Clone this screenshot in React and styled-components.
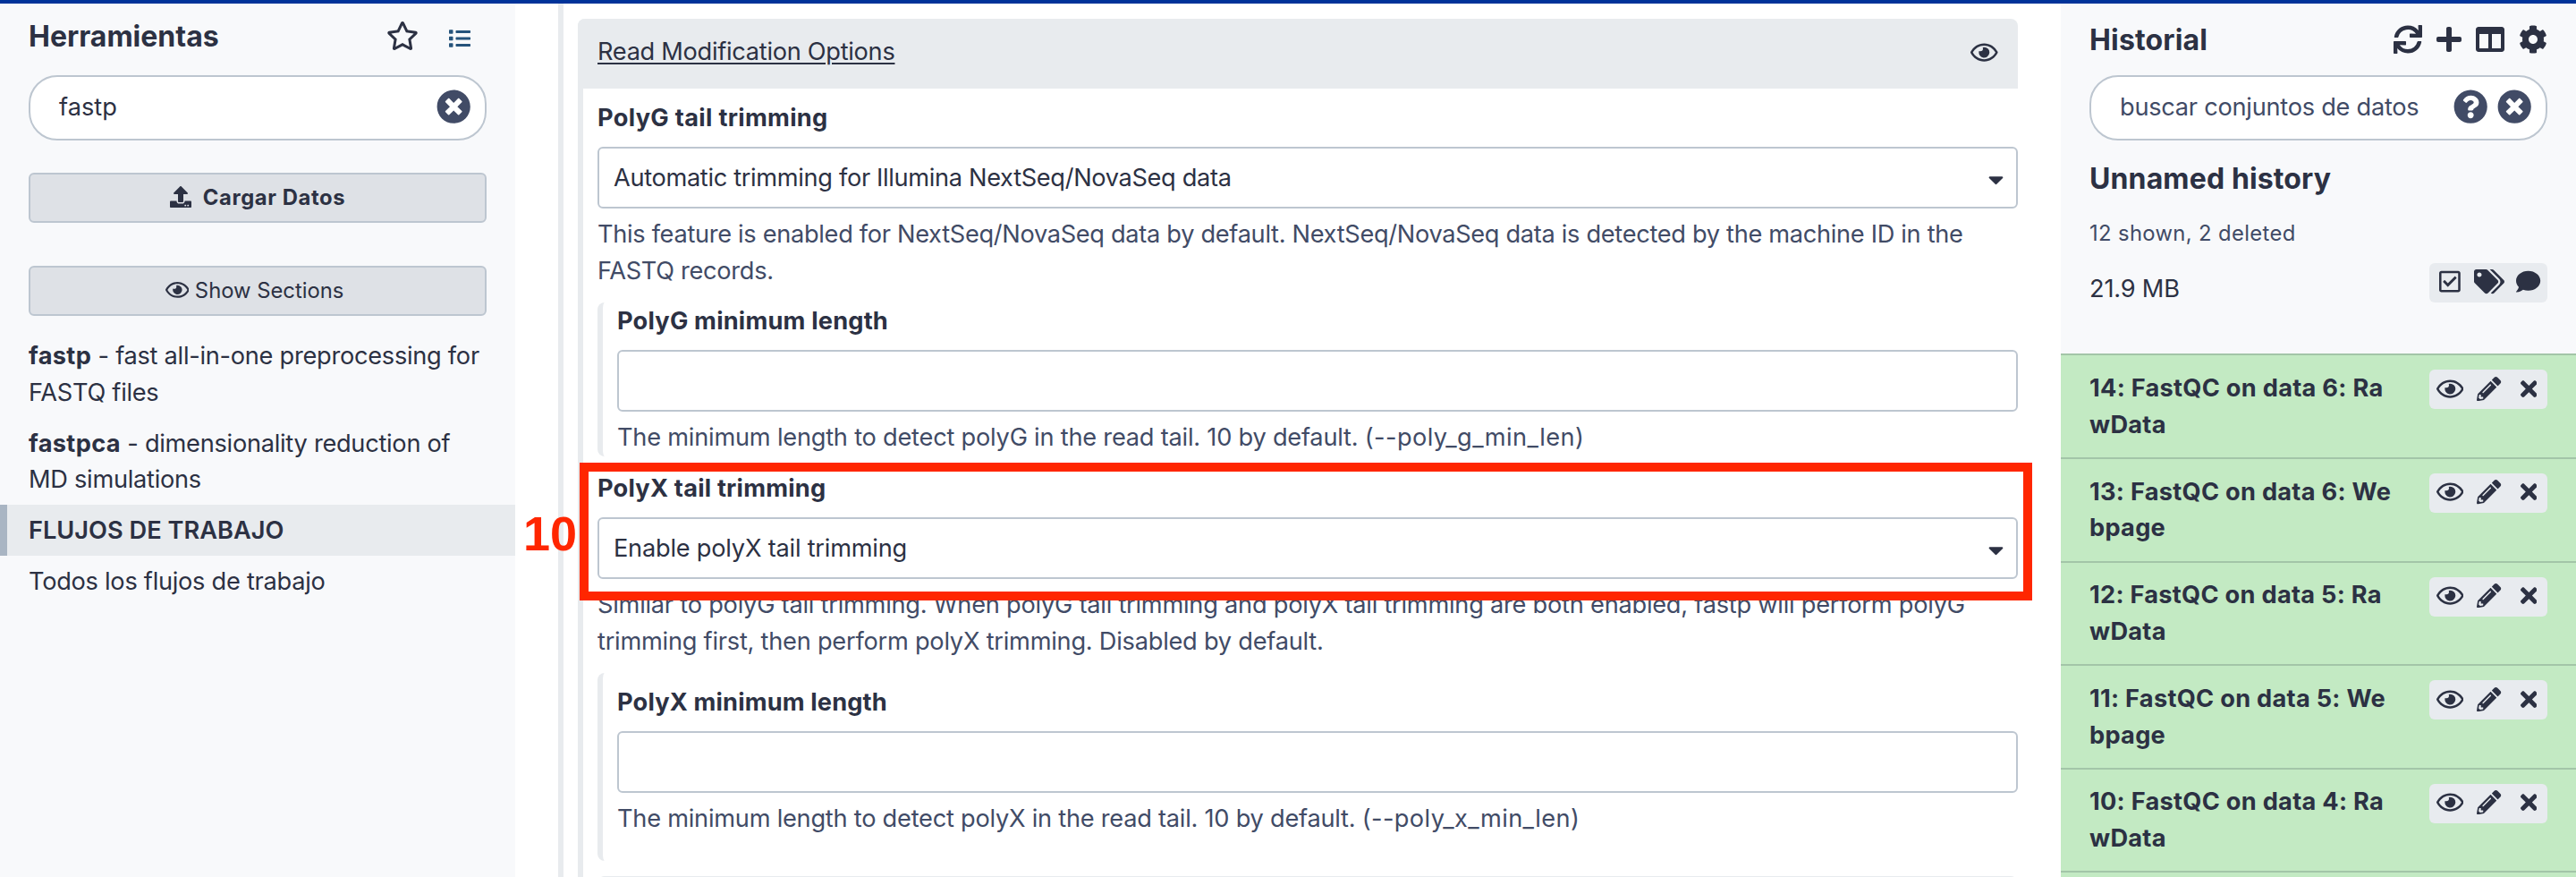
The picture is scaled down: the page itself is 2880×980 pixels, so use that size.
import React from "react";
import styled, { createGlobalStyle, css } from "styled-components";
import {
  FaCog, FaColumns, FaComment, FaList, FaPencilAlt, FaPlus, FaQuestionCircle,
  FaRegCheckSquare, FaRegEye, FaRegStar, FaSync, FaTags, FaTimes, FaTimesCircle, FaUpload, FaCaretDown,
} from "react-icons/fa";

const c = {
  text: "#2c3143",
  muted: "#414b66",
  border: "#bdc6d0",
  panel: "#f8f9fb",
  soft: "#e8ebee",
  button: "#dee1e6",
  mast: "#003399",
  ok: "#c3eac3",
  okLine: "#a3c5a8",
  mark: "#ff2600",
};

const GlobalStyle = createGlobalStyle`
  * { box-sizing: border-box; }
  body { margin: 0; background: #fff; }
`;

const tracked = css`
  letter-spacing: ${(p) => p.$track || 0}px;
`;

const Page = styled.div`
  position: relative;
  width: 2880px;
  height: 980px;
  overflow: hidden;
  border-top: 4px solid ${c.mast};
  display: grid;
  grid-template-columns: 576px 1fr 576px;
  font: 400 27.2px/40.8px Inter, "Liberation Sans", sans-serif;
  color: ${c.text};
`;

const SidePanel = styled.aside`
  background: ${c.panel};
  height: 976px;
  overflow: hidden;
`;

const PanelHeader = styled.header`
  display: flex;
  align-items: center;
  justify-content: space-between;
  height: ${(p) => p.$height}px;
  margin: 0 32px ${(p) => 80 - p.$height}px;
`;

const Heading = styled.h2`
  margin: 0;
  padding-top: 2px;
  font-size: 32px;
  line-height: 40px;
  font-weight: 700;
  ${tracked}
`;

/* $ratio is the glyph's width in 512ths of its height */
const Icon = styled.span`
  display: inline-flex;
  flex: none;
  color: ${(p) => p.$color || "inherit"};
  svg {
    display: block;
    height: ${(p) => p.$size || 27.2}px;
    width: ${(p) => ((p.$size || 27.2) * (p.$ratio || 512)) / 512}px;
  }
`;

const HeaderTools = styled.div`
  display: flex;
  align-items: center;
  gap: ${(p) => p.$gap}px;
  padding-right: ${(p) => p.$end || 0}px;
`;

const ListToggle = styled.span`
  display: flex;
  padding-top: 6px;
  color: #25537b;
  svg { width: 24px; height: 24px; display: block; }
`;

const SearchBox = styled.div`
  display: flex;
  align-items: center;
  gap: 10px;
  height: 73px;
  margin: 0 32px;
  padding: 0 15.8px 2px 32px;
  background: #fff;
  border: 2px solid ${c.border};
  border-radius: 32px;
  color: ${(p) => (p.$placeholder ? c.muted : c.text)};
`;

const SearchText = styled.span`
  flex: 1;
  padding-top: 2px;
  white-space: nowrap;
  ${tracked}
`;

const PanelButton = styled.button`
  display: flex;
  align-items: center;
  justify-content: center;
  gap: ${(p) => p.$gap}px;
  width: 512px;
  height: 56px;
  margin: ${(p) => p.$top}px 32px 0;
  padding: 0 ${(p) => p.$end || 0}px 2px 0;
  background: ${c.button};
  border: 2px solid ${c.border};
  border-radius: 6px;
  color: ${c.text};
  font: ${(p) => (p.$bold ? 700 : 400)} 23.8px/36px Inter, "Liberation Sans", sans-serif;
  ${tracked}
`;

const ButtonText = styled.span`
  padding-top: 2px;
`;

const ToolList = styled.nav`
  margin-top: 16px;
`;

const ToolItem = styled.a`
  display: block;
  padding: 9px 32px 7px;
  white-space: pre-line;
  letter-spacing: -0.27px;
  b { letter-spacing: 0.35px; }
`;

const ToolSection = styled.div`
  padding: 9px 32px 7px 24px;
  border-left: 8px solid #a9b5c3;
  background: ${c.soft};
  font-weight: 600;
`;

const Center = styled.main`
  padding: 0 48px;
  height: 976px;
  overflow: hidden;
`;

const OuterSection = styled.div`
  height: 976px;
  border-left: 6px solid ${c.soft};
  padding: 17px 0 0 16px;
`;

const Card = styled.section`
  height: 960px;
  border-left: 6px solid ${c.soft};
  border-radius: 8px 8px 0 0;
`;

const CardHeader = styled.header`
  display: flex;
  justify-content: space-between;
  align-items: center;
  height: 78px;
  margin-left: -6px;
  padding: 0 22px 3px;
  background: ${c.soft};
  border-radius: 8px 8px 0 0;
`;

const CardTitle = styled.span`
  text-decoration: underline;
  text-decoration-thickness: 2px;
  text-underline-offset: 3px;
  ${tracked}
`;

const CardBody = styled.div`
  padding: 12.2px 0 0 16px;
`;

const Field = styled.div`
  margin-top: ${(p) => p.$top || 0}px;
`;

const Nested = styled.div`
  margin-top: 16.4px;
  padding: ${(p) => p.$pad || "0"};
  padding-left: 16px;
  border-left: 6px solid ${c.soft};
  border-radius: 8px;
`;

const Label = styled.div`
  padding-top: 1px;
  margin-bottom: 11px;
  font-weight: 700;
  ${tracked}
`;

const control = css`
  height: 68.6px;
  background: #fff;
  border: 2px solid ${c.border};
  border-radius: 6px;
`;

const TextInput = styled.div`
  ${control}
`;

const Select = styled.div`
  ${control}
  display: flex;
  align-items: center;
  justify-content: space-between;
  padding: 2px 14px 0 16px;
`;

const SelectText = styled.span`
  ${tracked}
`;

const Caret = styled.span`
  padding-top: 3px;
  display: flex;
`;

const Help = styled.p`
  margin: 9.2px 0 -1.4px;
  color: ${c.muted};
  white-space: pre;
  ${tracked}
`;

const Flag = styled.span`
  letter-spacing: 0.4px;
`;

const NextHeader = styled.div`
  height: 78px;
  margin-top: 16.4px;
  background: ${c.soft};
  border-radius: 8px 8px 0 0;
`;

const HistoryMeta = styled.div`
  margin: 0 32px;
  height: 238.4px;
`;

const HistoryName = styled.div`
  padding-top: 21px;
`;

const HistoryCount = styled.div`
  margin-top: 23px;
  font-size: 23.8px;
  line-height: 36px;
  color: ${c.muted};
  ${tracked}
`;

const HistoryFooter = styled.div`
  display: flex;
  justify-content: space-between;
  align-items: center;
  height: 44px;
  margin-top: 15px;
`;

const SizeText = styled.span`
  padding-top: 14px;
  ${tracked}
`;

const ActionGroup = styled.div`
  display: grid;
  grid-template-columns: repeat(3, 44px);
  place-items: center;
  flex: none;
  width: 132px;
  height: 44px;
  padding: 0 0 2px 1px;
  background: #e8ebef;
  border-radius: 6px;
`;

const Dataset = styled.article`
  display: flex;
  justify-content: space-between;
  height: 115.6px;
  padding: 16px 32px;
  border-top: 2px solid ${c.okLine};
  background: ${c.ok};
`;

const DatasetName = styled.div`
  width: 342px;
  margin-top: 0.6px;
  font-weight: 700;
  letter-spacing: 0.28px;
  word-break: break-all;
`;

const Marker = styled.div`
  position: absolute;
  left: 648px;
  top: 513px;
  width: 1624px;
  height: 154px;
  border: 10px solid ${c.mark};
`;

const MarkerNumber = styled.div`
  position: absolute;
  left: 585px;
  top: 562px;
  font: 700 54px/60px "Liberation Sans", Arial, sans-serif;
  color: ${c.mark};
`;

const datasets = [
  "14: FastQC on data 6: RawData",
  "13: FastQC on data 6: Webpage",
  "12: FastQC on data 5: RawData",
  "11: FastQC on data 5: Webpage",
  "10: FastQC on data 4: RawData",
];

function SelectField({ value, track }) {
  return (
    <Select>
      <SelectText $track={track}>{value}</SelectText>
      <Caret><Icon $ratio={320}><FaCaretDown /></Icon></Caret>
    </Select>
  );
}

export default function App() {
  return (
    <Page>
      <GlobalStyle />
      <SidePanel>
        <PanelHeader $height={72}>
          <Heading>Herramientas</Heading>
          <HeaderTools $gap={34} $end={18}>
            <Icon $size={32} $ratio={576}><FaRegStar /></Icon>
            <ListToggle><FaList /></ListToggle>
          </HeaderTools>
        </PanelHeader>
        <SearchBox>
          <SearchText>fastp</SearchText>
          <Icon $size={38.4} $color={c.muted}><FaTimesCircle /></Icon>
        </SearchBox>
        <PanelButton $top={36} $gap={13} $bold $track={0.6}>
          <Icon $size={24}><FaUpload /></Icon>
          <ButtonText>Cargar Datos</ButtonText>
        </PanelButton>
        <PanelButton $top={48} $gap={6.5} $end={7}>
          <Icon $size={23.8} $ratio={576}><FaRegEye /></Icon>
          <ButtonText>Show Sections</ButtonText>
        </PanelButton>
        <ToolList>
          <ToolItem><b>fastp</b>{" - fast all-in-one preprocessing for\nFASTQ files"}</ToolItem>
          <ToolItem><b>fastpca</b>{" - dimensionality reduction of\nMD simulations"}</ToolItem>
          <ToolSection>FLUJOS DE TRABAJO</ToolSection>
          <ToolItem>Todos los flujos de trabajo</ToolItem>
        </ToolList>
      </SidePanel>

      <Center>
        <OuterSection>
          <Card>
            <CardHeader>
              <CardTitle $track={-0.29}>Read Modification Options</CardTitle>
              <Icon $ratio={576}><FaRegEye /></Icon>
            </CardHeader>
            <CardBody>
              <Field>
                <Label $track={0.31}>PolyG tail trimming</Label>
                <SelectField value="Automatic trimming for Illumina NextSeq/NovaSeq data" track={-0.33} />
                <Help $track={-0.31}>{"This feature is enabled for NextSeq/NovaSeq data by default. NextSeq/NovaSeq data is detected by the machine ID in the\nFASTQ records."}</Help>
              </Field>
              <Nested>
                <Label $track={0.2}>PolyG minimum length</Label>
                <TextInput />
                <Help $track={-0.22}>The minimum length to detect polyG in the read tail. 10 by default. <Flag>(--poly_g_min_len)</Flag></Help>
              </Nested>
              <Field $top={16.8}>
                <Label $track={0.21}>PolyX tail trimming</Label>
                <SelectField value="Enable polyX tail trimming" track={-0.22} />
                <Help $track={-0.235}>{"Similar to polyG tail trimming. When polyG tail trimming and polyX tail trimming are both enabled, fastp will perform polyG\ntrimming first, then perform polyX trimming. Disabled by default."}</Help>
              </Field>
              <Nested $pad="11.8px 0 28.4px">
                <Label $track={0.16}>PolyX minimum length</Label>
                <TextInput />
                <Help $track={-0.24}>The minimum length to detect polyX in the read tail. 10 by default. <Flag>(--poly_x_min_len)</Flag></Help>
              </Nested>
              <NextHeader />
            </CardBody>
          </Card>
        </OuterSection>
      </Center>

      <SidePanel>
        <PanelHeader $height={80}>
          <Heading $track={0.15}>Historial</Heading>
          <HeaderTools $gap={16}>
            <Icon $size={32}><FaSync /></Icon>
            <Icon $size={32} $ratio={448}><FaPlus /></Icon>
            <Icon $size={32}><FaColumns /></Icon>
            <Icon $size={32}><FaCog /></Icon>
          </HeaderTools>
        </PanelHeader>
        <SearchBox $placeholder>
          <SearchText $track={-0.26}>buscar conjuntos de datos</SearchText>
          <Icon $size={38.4}><FaQuestionCircle /></Icon>
          <Icon $size={38.4}><FaTimesCircle /></Icon>
        </SearchBox>
        <HistoryMeta>
          <HistoryName><Heading $track={0.13}>Unnamed history</Heading></HistoryName>
          <HistoryCount $track={0.36}>12 shown, 2 deleted</HistoryCount>
          <HistoryFooter>
            <SizeText $track={-0.2}>21.9 MB</SizeText>
            <ActionGroup>
              <Icon $ratio={448}><FaRegCheckSquare /></Icon>
              <Icon $ratio={640}><FaTags /></Icon>
              <Icon><FaComment /></Icon>
            </ActionGroup>
          </HistoryFooter>
        </HistoryMeta>
        {datasets.map((name) => (
          <Dataset key={name}>
            <DatasetName>{name}</DatasetName>
            <ActionGroup>
              <Icon $ratio={576}><FaRegEye /></Icon>
              <Icon><FaPencilAlt /></Icon>
              <Icon $ratio={352}><FaTimes /></Icon>
            </ActionGroup>
          </Dataset>
        ))}
        <Dataset />
      </SidePanel>

      <Marker />
      <MarkerNumber>10</MarkerNumber>
    </Page>
  );
}
